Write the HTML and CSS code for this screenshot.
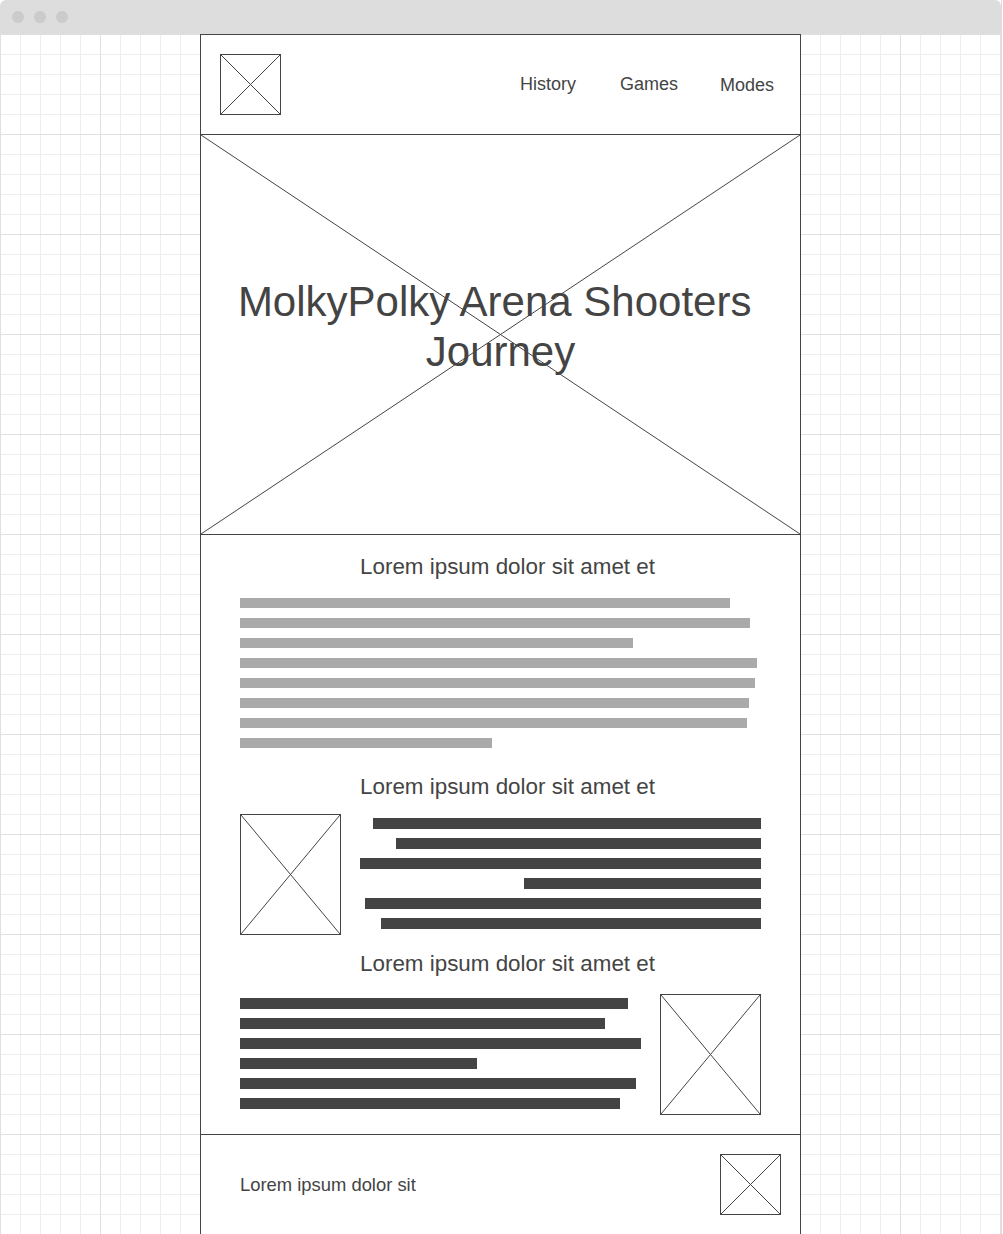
FILE: index.html
```html
<!DOCTYPE html>
<html lang="en">
<head>
<meta charset="utf-8">
<title>MolkyPolky Arena Shooters Journey</title>
<link rel="stylesheet" href="styles.css">
</head>
<body>
<div class="window">
  <div class="chrome">
    <span class="dot"></span><span class="dot"></span><span class="dot"></span>
  </div>
  <div class="page">
    <div class="frame">
      <header class="header">
        <div class="ph logo">
          <svg class="x" viewBox="0 0 100 100" preserveAspectRatio="none"><line x1="0" y1="0" x2="100" y2="100" vector-effect="non-scaling-stroke"/><line x1="100" y1="0" x2="0" y2="100" vector-effect="non-scaling-stroke"/></svg>
        </div>
        <nav class="nav">
          <a class="nav-link">History</a>
          <a class="nav-link">Games</a>
          <a class="nav-link nav-last">Modes</a>
        </nav>
      </header>

      <section class="hero">
        <svg class="x hero-x" viewBox="0 0 100 100" preserveAspectRatio="none"><line x1="0" y1="0" x2="100" y2="100" vector-effect="non-scaling-stroke"/><line x1="100" y1="0" x2="0" y2="100" vector-effect="non-scaling-stroke"/></svg>
        <h1 class="title">MolkyPolky Arena Shooters Journey</h1>
      </section>

      <main class="content">
        <h2 class="heading">Lorem ipsum dolor sit amet et</h2>
        <div class="lines gray">
          <span class="bar" style="width:490px"></span>
          <span class="bar" style="width:510px"></span>
          <span class="bar" style="width:393px"></span>
          <span class="bar" style="width:517px"></span>
          <span class="bar" style="width:515px"></span>
          <span class="bar" style="width:509px"></span>
          <span class="bar" style="width:507px"></span>
          <span class="bar" style="width:252px"></span>
        </div>

        <h2 class="heading h-second">Lorem ipsum dolor sit amet et</h2>
        <div class="row row-a">
          <div class="ph media">
            <svg class="x" viewBox="0 0 100 100" preserveAspectRatio="none"><line x1="0" y1="0" x2="100" y2="100" vector-effect="non-scaling-stroke"/><line x1="100" y1="0" x2="0" y2="100" vector-effect="non-scaling-stroke"/></svg>
          </div>
          <div class="lines dark right">
            <span class="bar" style="width:388px"></span>
            <span class="bar" style="width:365px"></span>
            <span class="bar" style="width:401px"></span>
            <span class="bar" style="width:237px"></span>
            <span class="bar" style="width:396px"></span>
            <span class="bar" style="width:380px"></span>
          </div>
        </div>

        <h2 class="heading h-third">Lorem ipsum dolor sit amet et</h2>
        <div class="row row-b">
          <div class="lines dark">
            <span class="bar" style="width:388px"></span>
            <span class="bar" style="width:365px"></span>
            <span class="bar" style="width:401px"></span>
            <span class="bar" style="width:237px"></span>
            <span class="bar" style="width:396px"></span>
            <span class="bar" style="width:380px"></span>
          </div>
          <div class="ph media">
            <svg class="x" viewBox="0 0 100 100" preserveAspectRatio="none"><line x1="0" y1="0" x2="100" y2="100" vector-effect="non-scaling-stroke"/><line x1="100" y1="0" x2="0" y2="100" vector-effect="non-scaling-stroke"/></svg>
          </div>
        </div>
      </main>

      <footer class="footer">
        <p class="footer-text">Lorem ipsum dolor sit</p>
        <div class="ph logo">
          <svg class="x" viewBox="0 0 100 100" preserveAspectRatio="none"><line x1="0" y1="0" x2="100" y2="100" vector-effect="non-scaling-stroke"/><line x1="100" y1="0" x2="0" y2="100" vector-effect="non-scaling-stroke"/></svg>
        </div>
      </footer>
    </div>
  </div>
</div>
</body>
</html>
```

FILE: styles.css
```css
html, body {
  margin: 0;
  padding: 0;
  background: #fff;
}

body {
  font-family: "Liberation Sans", Arial, sans-serif;
  color: #444;
  overflow: hidden;
}

.window {
  width: 1001px;
  border-right: 1px solid #dcdcdc;
  height: 1234px;
  overflow: hidden;
}

.chrome {
  height: 34px;
  background: #dddddd;
  border-radius: 6px 6px 0 0;
  display: flex;
  align-items: center;
  gap: 10px;
  padding-left: 12px;
  box-sizing: border-box;
}

.dot {
  width: 12px;
  height: 12px;
  border-radius: 50%;
  background: #cbcbcb;
}

.page {
  height: 1200px;
  background-color: #fff;
  background-image:
    linear-gradient(to right, #e0e0e0 1px, transparent 1px),
    linear-gradient(to bottom, #e0e0e0 1px, transparent 1px),
    linear-gradient(to right, #eeeeee 1px, transparent 1px),
    linear-gradient(to bottom, #eeeeee 1px, transparent 1px);
  background-size: 100px 100px, 100px 100px, 20px 20px, 20px 20px;
  padding-left: 200px;
  box-sizing: border-box;
}

.frame {
  width: 601px;
  height: 1200px;
  box-sizing: border-box;
  border: 1px solid #444;
  border-bottom: none;
  background: #fff;
}

/* placeholder boxes */
.ph {
  box-sizing: border-box;
  border: 1px solid #444;
  flex: none;
}

.x {
  display: block;
  width: 100%;
  height: 100%;
}

.x line {
  stroke: #444;
  stroke-width: 1;
}

.logo {
  width: 61px;
  height: 61px;
}

.media {
  width: 101px;
  height: 121px;
}

/* header */
.header {
  height: 100px;
  box-sizing: border-box;
  border-bottom: 1px solid #444;
  display: flex;
  align-items: center;
  padding-left: 19px;
}

.nav {
  margin-left: auto;
  display: flex;
  align-items: flex-start;
  gap: 20px;
}

.nav-link {
  width: 80px;
  font-size: 18px;
  line-height: 22px;
  color: #444;
  margin-top: -1px;
}

.nav-last {
  margin-top: 0;
}

/* hero */
.hero {
  position: relative;
  height: 400px;
  box-sizing: border-box;
  border-bottom: 1px solid #444;
  padding-top: 142px;
}

.hero-x {
  position: absolute;
  top: 0;
  left: 0;
}

.title {
  position: relative;
  margin: 0;
  font-size: 42px;
  line-height: 50px;
  font-weight: normal;
  text-align: center;
  white-space: break-spaces;
  color: #444;
}

/* content */
.content {
  padding: 18px 39px 19px;
  border-bottom: 1px solid #444;
}

.heading {
  margin: 0;
  font-size: 22.4px;
  line-height: 28px;
  font-weight: normal;
  text-align: center;
  padding-left: 14px;
  color: #444;
}

.h-second {
  margin-top: 25px;
}

.h-third {
  margin-top: 15px;
}

.lines {
  display: flex;
  flex-direction: column;
}

.lines.gray {
  margin-top: 17px;
  gap: 10px;
}

.lines.gray .bar {
  height: 10px;
  background: #aaaaaa;
}

.lines.dark {
  gap: 9px;
  margin-top: 4px;
}

.lines.dark .bar {
  height: 11px;
  background: #444;
}

.lines.right {
  align-items: flex-end;
}

.lines.dark:not(.right) {
  align-items: flex-start;
}

.bar {
  display: block;
}

.row {
  display: flex;
  justify-content: space-between;
  align-items: flex-start;
}

.row-a {
  margin-top: 13px;
}

.row-b {
  margin-top: 16px;
}

/* footer */
.footer {
  display: flex;
  align-items: center;
  justify-content: space-between;
  padding: 19px 19px 19px 39px;
}

.footer-text {
  margin: 0;
  font-size: 18.4px;
  line-height: 22px;
  color: #444;
}
```
